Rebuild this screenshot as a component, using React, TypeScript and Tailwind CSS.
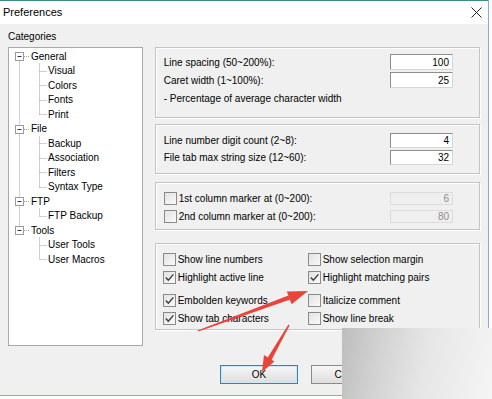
import React from 'react';

// tree rows: level 0 = root with expander, level 1 = child
const treeRows: { label: string; level: number }[] = [
    { label: 'General', level: 0 },
    { label: 'Visual', level: 1 },
    { label: 'Colors', level: 1 },
    { label: 'Fonts', level: 1 },
    { label: 'Print', level: 1 },
    { label: 'File', level: 0 },
    { label: 'Backup', level: 1 },
    { label: 'Association', level: 1 },
    { label: 'Filters', level: 1 },
    { label: 'Syntax Type', level: 1 },
    { label: 'FTP', level: 0 },
    { label: 'FTP Backup', level: 1 },
    { label: 'Tools', level: 0 },
    { label: 'User Tools', level: 1 },
    { label: 'User Macros', level: 1 },
];

const ROW_H = 14.5;
const TOP = 1;
const cy = (i: number) => Math.round(TOP + ROW_H * i + ROW_H / 2) + 0.5;

function TreeLines() {
    const roots = treeRows.map((r, i) => (r.level === 0 ? i : -1)).filter((i) => i >= 0);
    const groups: { parent: number; last: number; kids: number[] }[] = roots.map((p, k) => {
        const end = k + 1 < roots.length ? roots[k + 1] : treeRows.length;
        const kids: number[] = [];
        for (let i = p + 1; i < end; i++) kids.push(i);
        return { parent: p, last: end - 1, kids };
    });
    const dot = { stroke: '#a0a0a0', strokeWidth: 1, strokeDasharray: '1 1' };
    return (
        <svg className="absolute inset-0 pointer-events-none" width="133" height="297">
            {/* vertical line between roots */}
            {roots.slice(0, -1).map((p, k) => (
                <line key={'rv' + p} x1="10.5" y1={cy(p) + 4} x2="10.5" y2={cy(roots[k + 1]) - 4} {...dot} />
            ))}
            {groups.map((g) => (
                <g key={g.parent}>
                    <line x1="30.5" y1={cy(g.parent) + 7} x2="30.5" y2={cy(g.last)} {...dot} />
                    {g.kids.map((c) => (
                        <line key={c} x1="30.5" y1={cy(c)} x2="38" y2={cy(c)} {...dot} />
                    ))}
                    <line x1="15" y1={cy(g.parent)} x2="20" y2={cy(g.parent)} {...dot} />
                    <rect x="6.5" y={cy(g.parent) - 4} width="8" height="8" fill="#fff" stroke="#9a9a9a" />
                    <line x1="8.5" y1={cy(g.parent)} x2="12.5" y2={cy(g.parent)} stroke="#333" />
                </g>
            ))}
        </svg>
    );
}

function NumBox({ value, disabled, h = 'h-[16px]' }: { value: string; disabled?: boolean; h?: string }) {
    return (
        <div
            className={`w-[63px] ${h} border text-right pr-[3px] flex items-center justify-end ${
                disabled ? 'border-[#dcdcdc] bg-[#efefef] text-[#8c8c8c]' : 'border-[#8d8d8d] border-r-[#d6d6d6] border-b-[#d6d6d6] bg-white'
            }`}
        >
            {value}
        </div>
    );
}

function Check({ on }: { on?: boolean }) {
    return (
        <span className="w-[13px] h-[13px] border border-[#8a8a8a] bg-[linear-gradient(135deg,#e2e2e2,#fafafa)] flex items-center justify-center shrink-0">
            {on && (
                <svg width="11" height="11" viewBox="0 0 11 11">
                    <path d="M1.8 5.6 L4.3 8.2 L9.4 2.4" fill="none" stroke="#3a3a3a" strokeWidth="1.4" />
                </svg>
            )}
        </span>
    );
}

function CheckRow({ label, on }: { label: string; on?: boolean }) {
    return (
        <div className="h-[18px] flex items-center gap-[2px]">
            <Check on={on} />
            <span>{label}</span>
        </div>
    );
}

const groupCls = 'border border-[#c4c4c4] shadow-[inset_1px_1px_0_#fff,1px_1px_0_#fff]';

export default function App() {
    return (
        <div className="w-[492px] h-[399px] bg-white relative overflow-hidden font-['Liberation_Sans',Arial,sans-serif] text-[10px] text-black">
            <div className="w-[489px] h-[396px] bg-[#f0f0f0] border-r border-b border-[#86acd6] flex flex-col">
                {/* title bar */}
                <div className="h-[24px] bg-white border-t border-[#3b8b86] flex items-center justify-between pl-[3px] pr-[6px] text-[11px]">
                    <span>Preferences</span>
                    <svg width="11" height="11" viewBox="0 0 11 11">
                        <path d="M0.5 0.5 L10.5 10.5 M10.5 0.5 L0.5 10.5" stroke="#222" strokeWidth="1" />
                    </svg>
                </div>

                <div className="flex px-[8px] gap-[12px]">
                    {/* categories */}
                    <div className="w-[135px] flex flex-col">
                        <div className="h-[23px] flex items-end pb-[4px] leading-[12px]">Categories</div>
                        <div className="h-[299px] bg-white border border-[#a9a9a9] relative">
                            <TreeLines />
                            <div className="pt-[1px]">
                                {treeRows.map((r) => (
                                    <div
                                        key={r.label}
                                        className={`h-[14.5px] flex items-center ${r.level === 0 ? 'pl-[22px]' : 'pl-[39px]'}`}
                                    >
                                        {r.label}
                                    </div>
                                ))}
                            </div>
                        </div>
                    </div>

                    {/* settings */}
                    <div className="w-[326px] pt-[23px] flex flex-col">
                        <div className={`${groupCls} h-[71px] pt-[5px] pl-[8px] pr-[26px]`}>
                            <div className="h-[18px] flex items-center justify-between">
                                <span>Line spacing (50~200%):</span>
                                <NumBox value="100" />
                            </div>
                            <div className="h-[18px] flex items-center justify-between">
                                <span>Caret width (1~100%):</span>
                                <NumBox value="25" />
                            </div>
                            <div className="h-[18px] flex items-center">- Percentage of average character width</div>
                        </div>

                        <div className={`${groupCls} h-[50px] mt-[6px] pt-[7px] pl-[8px] pr-[26px]`}>
                            <div className="h-[17px] flex items-center justify-between">
                                <span>Line number digit count (2~8):</span>
                                <NumBox value="4" h="h-[15px]" />
                            </div>
                            <div className="h-[17px] flex items-center justify-between">
                                <span>File tab max string size (12~60):</span>
                                <NumBox value="32" h="h-[15px]" />
                            </div>
                        </div>

                        <div className={`${groupCls} h-[48px] mt-[8px] pt-[6px] pl-[8px] pr-[26px]`}>
                            <div className="h-[18px] flex items-center justify-between">
                                <CheckRow label="1st column marker at (0~200):" />
                                <NumBox value="6" disabled h="h-[13px]" />
                            </div>
                            <div className="h-[18px] flex items-center justify-between">
                                <CheckRow label="2nd column marker at (0~200):" />
                                <NumBox value="80" disabled h="h-[13px]" />
                            </div>
                        </div>

                        <div className={`${groupCls} h-[87px] mt-[13px] pt-[6px] pl-[7px]`}>
                            <div className="grid grid-cols-[145px_1fr]">
                                <CheckRow label="Show line numbers" />
                                <CheckRow label="Show selection margin" />
                                <CheckRow label="Highlight active line" on />
                                <CheckRow label="Highlight matching pairs" on />
                            </div>
                            <div className="grid grid-cols-[145px_1fr] mt-[5px]">
                                <CheckRow label="Embolden keywords" on />
                                <CheckRow label="Italicize comment" />
                                <CheckRow label="Show tab characters" on />
                                <CheckRow label="Show line break" />
                            </div>
                        </div>
                    </div>
                </div>

                {/* buttons */}
                <div className="flex justify-end gap-[13px] pr-[8px] mt-[19px]">
                    <button className="w-[78px] h-[19px] border border-[#3c7fb1] bg-[linear-gradient(#f6f6f6,#dedede)] shadow-[inset_0_0_0_1px_#cfe6f8] flex items-center justify-center">
                        OK
                    </button>
                    <button className="w-[78px] h-[19px] border border-[#8a8a8a] bg-[linear-gradient(#f6f6f6,#dedede)] flex items-center justify-center">
                        Cancel
                    </button>
                    <button className="w-[78px] h-[19px] border border-[#8a8a8a] bg-[linear-gradient(#f6f6f6,#dedede)] flex items-center justify-center">
                        Help
                    </button>
                </div>
            </div>

            {/* blurred corner */}
            <div className="absolute left-[342px] top-[328px] w-[150px] h-[71px] bg-[linear-gradient(100deg,#bdbdbd_0%,#d2d2d2_25%,#e6e6e6_55%,#f5f5f5_100%)]" />

            {/* red annotation arrows */}
            <svg className="absolute inset-0 pointer-events-none" width="492" height="399">
                <polygon points="197.6,330.4 198.4,331.6 290.2,299.6 288.4,295.6" fill="#e8443a" />
                <polygon points="308,291 291.6,304.2 286.8,291.4" fill="#e8443a" />
                <polygon points="288.4,324.5 289.6,325.5 271.3,360.5 267.3,358.3" fill="#e8443a" />
                <polygon points="262,372 274.4,361.4 264,354.9" fill="#e8443a" />
            </svg>
        </div>
    );
}
